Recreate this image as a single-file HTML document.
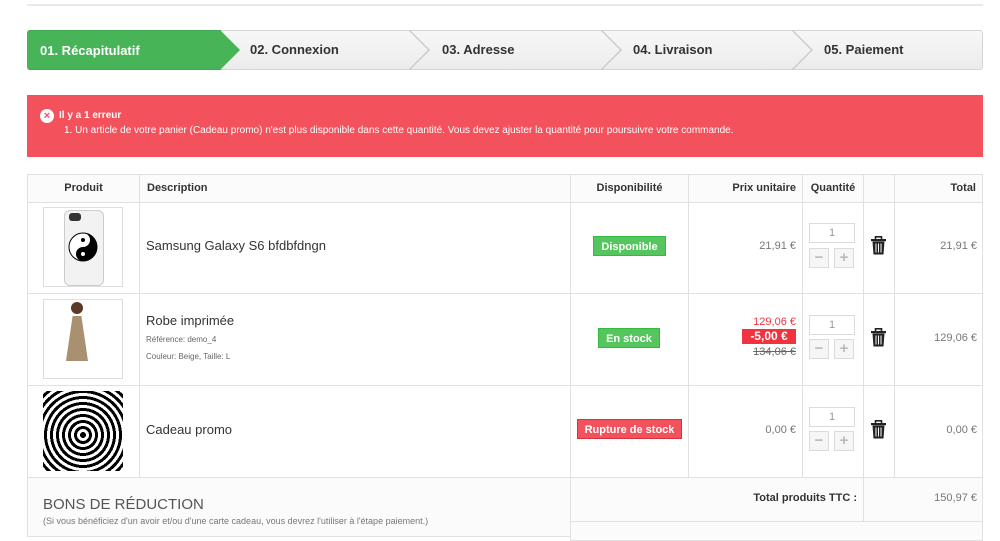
<!DOCTYPE html><html><head><meta charset="utf-8"><style>
body{margin:0;width:1000px;height:528px;overflow:hidden;background:#fff;font-family:"Liberation Sans",Arial,sans-serif;position:relative;color:#333}
.a{position:absolute}
.step{position:absolute;top:30px;height:40px;line-height:40px;font-size:13px;font-weight:bold;color:#333;background:linear-gradient(#f7f7f7,#ececec);border-top:1px solid #d6d4d4;border-bottom:1px solid #d6d4d4;box-sizing:border-box}
.c{position:absolute;border:1px solid #e1e1e1;box-sizing:border-box}
.h{font-size:11px;font-weight:bold;color:#333;background:#fbfbfb}
.p{font-size:11px;color:#777;text-align:right}
.lab{position:absolute;color:#fff;font-size:11px;font-weight:bold;text-align:center;line-height:20px;height:20px;box-sizing:border-box}
.q{position:absolute;width:46px;height:20px;border:1px solid #dbdbdb;font-size:11px;color:#999;text-align:center;line-height:18px;box-sizing:border-box}
.b{position:absolute;width:20px;height:20px;border:1px solid #dbdbdb;background:#f6f6f6;box-sizing:border-box;color:#bbb;font-weight:bold;text-align:center;line-height:17px;font-size:15px}
</style></head><body>
<div class="a" style="left:27px;top:4px;width:956px;height:2px;background:#eaeaea"></div>
<div class="step" style="left:27px;width:956px;border:1px solid #d6d4d4;border-radius:3px"></div>
<div class="step" style="left:27px;width:194px;background:#46b457;color:#fff;padding-left:13px;border-color:#43a853;border-radius:3px 0 0 3px">01. Récapitulatif</div>
<svg class="a" style="left:220px;top:30px" width="22" height="40"><polygon points="0,0 20,20 0,40" fill="#46b457"/></svg>
<svg class="a" style="left:409px;top:30px" width="22" height="40"><polyline points="0,0 20,20 0,40" fill="none" stroke="#ccc" stroke-width="1.5"/></svg>
<svg class="a" style="left:601px;top:30px" width="22" height="40"><polyline points="0,0 20,20 0,40" fill="none" stroke="#ccc" stroke-width="1.5"/></svg>
<svg class="a" style="left:792px;top:30px" width="22" height="40"><polyline points="0,0 20,20 0,40" fill="none" stroke="#ccc" stroke-width="1.5"/></svg>
<div class="a" style="left:250px;top:30px;line-height:40px;font-size:13px;font-weight:bold">02. Connexion</div>
<div class="a" style="left:442px;top:30px;line-height:40px;font-size:13px;font-weight:bold">03. Adresse</div>
<div class="a" style="left:633px;top:30px;line-height:40px;font-size:13px;font-weight:bold">04. Livraison</div>
<div class="a" style="left:824px;top:30px;line-height:40px;font-size:13px;font-weight:bold">05. Paiement</div>
<div class="a" style="left:27px;top:95px;width:956px;height:62px;background:#f3515c;color:#fff;font-size:10px">
<div class="a" style="left:13px;top:14px;width:14px;height:14px;border-radius:50%;background:#fff;color:#f3515c;font-size:11px;font-weight:bold;text-align:center;line-height:14px">×</div>
<div class="a" style="left:32px;top:15px;font-weight:bold;font-size:10px">Il y a 1 erreur</div>
<div class="a" style="left:37px;top:30px">1. Un article de votre panier (Cadeau promo) n'est plus disponible dans cette quantité. Vous devez ajuster la quantité pour poursuivre votre commande.</div></div>
<div class="c h" style="left:27px;top:174px;width:113px;height:29px;text-align:center;line-height:26px">Produit</div>
<div class="c h" style="left:139px;top:174px;width:432px;height:29px;line-height:26px;padding-left:7px">Description</div>
<div class="c h" style="left:570px;top:174px;width:119px;height:29px;text-align:center;line-height:26px">Disponibilité</div>
<div class="c h" style="left:688px;top:174px;width:115px;height:29px;text-align:right;line-height:26px;padding-right:6px">Prix unitaire</div>
<div class="c h" style="left:802px;top:174px;width:62px;height:29px;text-align:center;line-height:26px">Quantité</div>
<div class="c h" style="left:863px;top:174px;width:32px;height:29px"></div>
<div class="c h" style="left:894px;top:174px;width:89px;height:29px;text-align:right;line-height:26px;padding-right:6px">Total</div>
<div class="c" style="left:27px;top:202px;width:113px;height:92px"></div>
<div class="c" style="left:139px;top:202px;width:432px;height:92px"></div>
<div class="c" style="left:570px;top:202px;width:119px;height:92px"></div>
<div class="c" style="left:688px;top:202px;width:115px;height:92px"></div>
<div class="c" style="left:802px;top:202px;width:62px;height:92px"></div>
<div class="c" style="left:863px;top:202px;width:32px;height:92px"></div>
<div class="c" style="left:894px;top:202px;width:89px;height:92px"></div>
<div class="c" style="left:27px;top:293px;width:113px;height:93px"></div>
<div class="c" style="left:139px;top:293px;width:432px;height:93px"></div>
<div class="c" style="left:570px;top:293px;width:119px;height:93px"></div>
<div class="c" style="left:688px;top:293px;width:115px;height:93px"></div>
<div class="c" style="left:802px;top:293px;width:62px;height:93px"></div>
<div class="c" style="left:863px;top:293px;width:32px;height:93px"></div>
<div class="c" style="left:894px;top:293px;width:89px;height:93px"></div>
<div class="c" style="left:27px;top:385px;width:113px;height:93px"></div>
<div class="c" style="left:139px;top:385px;width:432px;height:93px"></div>
<div class="c" style="left:570px;top:385px;width:119px;height:93px"></div>
<div class="c" style="left:688px;top:385px;width:115px;height:93px"></div>
<div class="c" style="left:802px;top:385px;width:62px;height:93px"></div>
<div class="c" style="left:863px;top:385px;width:32px;height:93px"></div>
<div class="c" style="left:894px;top:385px;width:89px;height:93px"></div>
<div class="a" style="left:43px;top:207px;width:80px;height:80px;border:1px solid #ddd;box-sizing:border-box"></div>
<div class="a" style="left:64px;top:210px;width:38px;height:74px;background:#f2f2f2;border:1px solid #ccc;border-radius:6px"></div>
<div class="a" style="left:69px;top:213px;width:12px;height:8px;background:#333;border-radius:3px"></div>
<svg class="a" style="left:68px;top:232px" width="30" height="30" viewBox="-15 -15 30 30"><circle r="14" fill="#fff" stroke="#000"/><path d="M0,-14 A14,14 0 0,1 0,14 A7,7 0 0,1 0,0 A7,7 0 0,0 0,-14Z" fill="#000"/><circle cy="-7" r="2" fill="#000"/><circle cy="7" r="2" fill="#fff"/></svg>
<div class="a" style="left:43px;top:299px;width:80px;height:80px;border:1px solid #ddd;box-sizing:border-box"></div>
<div class="a" style="left:71px;top:302px;width:12px;height:12px;background:#5a3a28;border-radius:50%"></div>
<div class="a" style="left:66px;top:316px;width:22px;height:45px;background:#a89070;clip-path:polygon(30% 0,70% 0,100% 100%,0 100%)"></div>
<div class="a" style="left:43px;top:391px;width:80px;height:80px;background:repeating-radial-gradient(circle at 50% 55%,#000 0 3px,#fff 3px 6px)"></div>
<div class="a" style="left:146px;top:238px;font-size:13px;color:#333">Samsung Galaxy S6 bfdbfdngn</div>
<div class="a" style="left:146px;top:313px;font-size:13px;color:#333">Robe imprimée</div>
<div class="a" style="left:146px;top:335px;font-size:8px;color:#666">Référence: demo_4</div>
<div class="a" style="left:146px;top:352px;font-size:8px;color:#666">Couleur: Beige, Taille: L</div>
<div class="a" style="left:146px;top:422px;font-size:13px;color:#333">Cadeau promo</div>
<div class="lab" style="left:593px;top:236px;width:73px;background:#55c65e;border:1px solid #36b940">Disponible</div>
<div class="lab" style="left:598px;top:328px;width:62px;background:#55c65e;border:1px solid #36b940">En stock</div>
<div class="lab" style="left:577px;top:419px;width:105px;background:#f3515c;border:1px solid #d4323d">Rupture de stock</div>
<div class="a p" style="left:688px;top:240px;width:108px">21,91 €</div>
<div class="a p" style="left:688px;top:316px;width:108px;color:#f13340">129,06 €</div>
<div class="a" style="left:742px;top:329px;width:54px;height:15px;background:#f13340;color:#fff;font-size:12px;font-weight:bold;text-align:center;line-height:15px">-5,00 €</div>
<div class="a p" style="left:688px;top:346px;width:108px;text-decoration:line-through;color:#666">134,06 €</div>
<div class="a p" style="left:688px;top:424px;width:108px">0,00 €</div>
<div class="a p" style="left:894px;top:240px;width:83px">21,91 €</div>
<div class="a p" style="left:894px;top:332px;width:83px">129,06 €</div>
<div class="a p" style="left:894px;top:424px;width:83px">0,00 €</div>
<div class="q" style="left:809px;top:223px">1</div><div class="b" style="left:809px;top:248px">−</div><div class="b" style="left:834px;top:248px">+</div>
<div class="q" style="left:809px;top:315px">1</div><div class="b" style="left:809px;top:339px">−</div><div class="b" style="left:834px;top:339px">+</div>
<div class="q" style="left:809px;top:407px">1</div><div class="b" style="left:809px;top:431px">−</div><div class="b" style="left:834px;top:431px">+</div>
<svg class="a" style="left:871px;top:236px" width="15" height="19" viewBox="0 0 15 19"><rect x="4.5" y="0.8" width="6" height="3" fill="none" stroke="#222" stroke-width="1.6"/><rect x="0" y="3" width="15" height="2.2" fill="#222"/><path d="M1.5 5.5h12l-1 13h-10z" fill="#222"/><path d="M5 7.5v9M7.5 7.5v9M10 7.5v9" stroke="#fff" stroke-width="1"/></svg>
<svg class="a" style="left:871px;top:328px" width="15" height="19" viewBox="0 0 15 19"><rect x="4.5" y="0.8" width="6" height="3" fill="none" stroke="#222" stroke-width="1.6"/><rect x="0" y="3" width="15" height="2.2" fill="#222"/><path d="M1.5 5.5h12l-1 13h-10z" fill="#222"/><path d="M5 7.5v9M7.5 7.5v9M10 7.5v9" stroke="#fff" stroke-width="1"/></svg>
<svg class="a" style="left:871px;top:420px" width="15" height="19" viewBox="0 0 15 19"><rect x="4.5" y="0.8" width="6" height="3" fill="none" stroke="#222" stroke-width="1.6"/><rect x="0" y="3" width="15" height="2.2" fill="#222"/><path d="M1.5 5.5h12l-1 13h-10z" fill="#222"/><path d="M5 7.5v9M7.5 7.5v9M10 7.5v9" stroke="#fff" stroke-width="1"/></svg>
<div class="c" style="left:27px;top:477px;width:544px;height:60px;background:#fbfbfb"></div>
<div class="c" style="left:570px;top:477px;width:294px;height:45px;background:#fbfbfb"></div>
<div class="c" style="left:863px;top:477px;width:120px;height:45px;background:#fbfbfb"></div>
<div class="c" style="left:570px;top:521px;width:413px;height:20px;background:#fbfbfb"></div>
<div class="a" style="left:43px;top:496px;font-size:15px;color:#555">BONS DE RÉDUCTION</div>
<div class="a" style="left:43px;top:516px;font-size:9px;color:#777">(Si vous bénéficiez d'un avoir et/ou d'une carte cadeau, vous devrez l'utiliser à l'étape paiement.)</div>
<div class="a" style="left:570px;top:492px;width:287px;text-align:right;font-size:11px;font-weight:bold">Total produits TTC :</div>
<div class="a p" style="left:894px;top:492px;width:83px">150,97 €</div>
</body></html>
